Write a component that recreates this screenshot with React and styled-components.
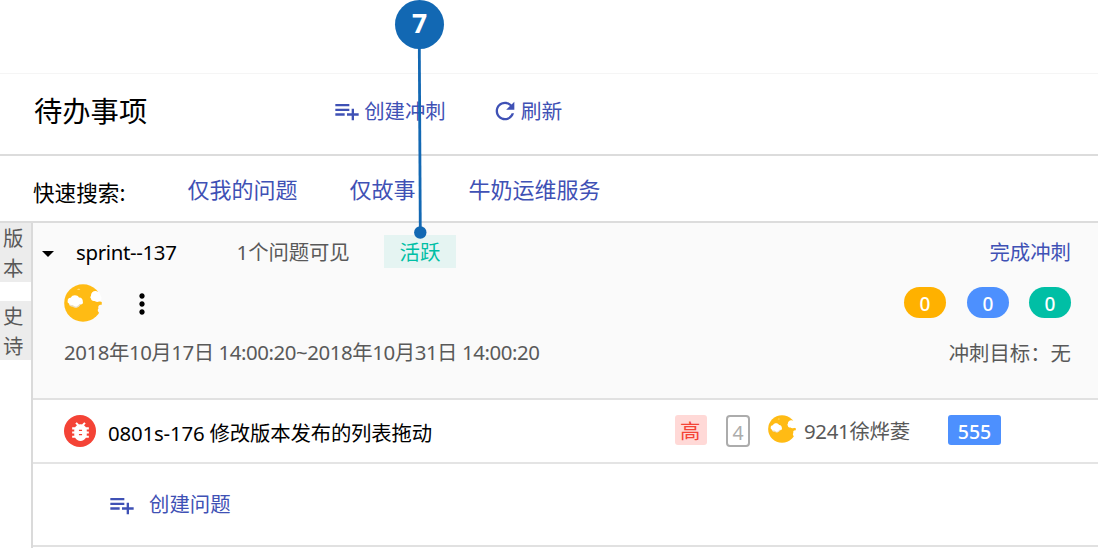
import React from "react";
import styled, { createGlobalStyle } from "styled-components";

const Global = createGlobalStyle`
  * { box-sizing: border-box; }
  html, body { margin: 0; padding: 0; background: #fff; overflow: hidden; }
  body { font-family: "Noto Sans", "Noto Sans CJK SC", sans-serif; }
`;

const Page = styled.div`
  position: relative;
  width: 1098px;
  height: 548px;
  background: #fff;
  display: flex;
  flex-direction: column;
  overflow: hidden;
`;

const TopBar = styled.div`
  height: 74px;
  flex: none;
  border-bottom: 1px solid #f5f5f5;
`;

const Text = styled.span`
  font-family: ${(p) => (p.$cjk ? '"Noto Sans CJK SC", sans-serif' : "inherit")};
  font-size: ${(p) => p.$size || 20.4}px;
  line-height: 30px;
  letter-spacing: ${(p) => p.$track || 0}px;
  font-weight: 400;
  color: ${(p) => p.$color || "#595959"};
  white-space: nowrap;
  margin-left: ${(p) => p.$left || 0}px;
  margin-top: ${(p) => p.$top || 0}px;
`;

const Header = styled.header`
  display: flex;
  align-items: flex-start;
  height: 82px;
  flex: none;
  padding: 21px 0 0 34px;
  border-bottom: 2px solid #dcdcdc;
`;

const Filters = styled.nav`
  display: flex;
  align-items: flex-start;
  height: 67px;
  flex: none;
  padding: 17px 0 0 33px;
  border-bottom: 2px solid #dcdcdc;
`;

const Action = styled.div`
  display: flex;
  align-items: flex-start;
  margin-left: ${(p) => p.$left}px;
`;

const Icon = styled.svg`
  flex: none;
  width: ${(p) => p.$size}px;
  height: ${(p) => p.$size}px;
  fill: ${(p) => p.$color || "#3f51b5"};
  margin-top: ${(p) => p.$top || 0}px;
`;

const Body = styled.div`
  display: flex;
  flex: 1;
`;

const Side = styled.aside`
  width: 33px;
  border-right: 2px solid #dadada;
  display: flex;
  flex-direction: column;
  gap: 19px;
`;

const SideTab = styled.div`
  height: 59px;
  width: 31px;
  padding-left: 3px;
  background: #ececec;
  color: #595959;
  font-family: "Noto Sans CJK SC", sans-serif;
  font-size: 20.4px;
  line-height: 29.5px;
  display: flex;
  flex-direction: column;
`;

const Main = styled.main`
  flex: 1;
  display: flex;
  flex-direction: column;
`;

const Sprint = styled.section`
  height: 177px;
  background: #fafafa;
  border-bottom: 2px solid #e1e1e1;
  padding-right: 27px;
`;

const SprintTop = styled.div`
  display: flex;
  align-items: flex-start;
  height: 61px;
  padding: 12px 0 0 9px;
`;

const Caret = styled.i`
  width: 0;
  height: 0;
  margin-top: 16px;
  border: 6.5px solid transparent;
  border-top: 6.5px solid #000;
  border-bottom: 0;
`;

const Status = styled.div`
  width: 72px;
  height: 33px;
  margin-left: 34px;
  background: #e5f4f2;
  display: flex;
  padding-left: 16px;
`;

const Spacer = styled.div`
  flex: 1;
`;

const SprintMiddle = styled.div`
  display: flex;
  align-items: flex-start;
  height: 51px;
  padding-left: 31px;
`;

const Count = styled.div`
  width: 42px;
  height: 31px;
  margin: 3px 0 0 ${(p) => p.$left || 0}px;
  border-radius: 16px;
  background: ${(p) => p.$bg};
  color: #fff;
  font-size: 19px;
  font-weight: 500;
  line-height: 34px;
  text-align: center;
`;

const SprintDates = styled.div`
  display: flex;
  align-items: flex-start;
  padding-left: 31px;
`;

const Issue = styled.div`
  display: flex;
  align-items: flex-start;
  height: 64px;
  padding: 15px 0 0 31px;
  border-bottom: 2px solid #e4e4e4;
`;

const BugBadge = styled.div`
  width: 32px;
  height: 32px;
  border-radius: 50%;
  background: #f44336;
  display: flex;
  align-items: center;
  justify-content: center;
`;

const Title = styled.div`
  width: 579px;
  display: flex;
  padding-left: 12px;
`;

const Priority = styled.div`
  width: 32px;
  height: 30px;
  border-radius: 3px;
  background: #ffd9d7;
  display: flex;
  padding-left: 5px;
`;

const Points = styled.div`
  width: 24px;
  height: 32px;
  margin: 0 18px 0 19px;
  border: 2px solid #acacac;
  border-radius: 4px;
  color: #acacac;
  font-size: 19.5px;
  line-height: 32px;
  text-align: center;
`;

const Epic = styled.div`
  width: 53px;
  height: 30px;
  margin-right: 97px;
  border-radius: 3px;
  background: #4d90fe;
  color: #fff;
  font-size: 19.5px;
  font-weight: 500;
  line-height: 33px;
  text-align: center;
`;

const Create = styled.div`
  display: flex;
  align-items: flex-start;
  height: 83px;
  padding: 24px 0 0 75px;
  border-bottom: 2px solid #e1e1e1;
`;

const Callout = styled.div`
  position: absolute;
  left: 395px;
  top: 0;
  width: 49px;
  height: 239px;
`;

const Bubble = styled.div`
  position: absolute;
  inset: 0 0 auto 0;
  height: 49px;
  border-radius: 50%;
  background: #1268b3;
  color: #fff;
  font-family: "Open Sans", "Noto Sans", sans-serif;
  font-weight: 700;
  font-size: 26.5px;
  line-height: 47px;
  text-align: center;
`;

const Pointer = styled.svg`
  position: absolute;
  left: 0;
  top: 0;
`;

const PlaylistAdd = ({ top }) => (
  <Icon viewBox="0 0 24 24" $size={28} $top={top}>
    <path d="M14 10H2v2h12v-2zm0-4H2v2h12V6zm4 8v-4h-2v4h-4v2h4v4h2v-4h4v-2h-4zM2 16h8v-2H2v2z" />
  </Icon>
);

const Refresh = () => (
  <Icon viewBox="0 0 24 24" $size={28} $top={2}>
    <path d="M17.65 6.35C16.2 4.9 14.21 4 12 4c-4.42 0-7.99 3.58-7.99 8s3.57 8 7.99 8c3.73 0 6.84-2.55 7.73-6h-2.08c-.82 2.33-3.04 4-5.65 4-3.31 0-6-2.69-6-6s2.69-6 6-6c1.66 0 3.14.69 4.22 1.78L13 11h7V4l-2.35 2.35z" />
  </Icon>
);

const More = styled(Icon)`
  margin-left: 24px;
`;

const Avatar = ({ size, bg }) => (
  <svg width={size} height={size} viewBox="0 0 38 38">
    <circle cx="19" cy="19" r="18.8" fill="#ffbb14" />
    <path d="M33 8.500L38 8.500V18l-4-1z" fill={bg} />
    <path d="M38 21c-2.500-1-4.500 1-3.500 3.500-1.500 1.500-.5 3.500 1 4.500l3 0z" fill={bg} />
    <path d="M27 12c-.5-3 3-6 6-4.500 2 0 3.500 2 3.500 4 2 2 1 5.500-1.500 6-2 .8-3.500.2-4.500-.5-2 .3-3.500-.8-3.500-2.500-1-.5-.8-2 0-2.500z" fill="#fff" />
    <path d="M3.700 17c-.3-2 1.300-3.500 3-3.200 1.500-3.500 7-3.200 8.300-.3 2.500-.2 4 2 3.800 4 .8 2-1 3.500-2.800 3-1.500 3.500-5 3.500-7 1-2 1-4-.3-4-2-1.300-.5-1.700-1.500-1.300-2.500z" fill="#fff" />
    <path d="M5 20c2 1.500 3 .5 4 1.500 2 2 5 1 6.500-1.500l2 0c-2 1-1 1-2.500 2.500-2 2-5 1.500-6 .2-2 .3-3.500-.8-4-2.700z" fill="#e8e0cd" />
    <path d="M13.200 6c.4-1.600 2.800-1.500 3-.2z" fill="#ffe08a" />
  </svg>
);

const Bug = () => (
  <svg width="25" height="25" viewBox="0 0 24 24" fill="#fff">
    <path d="M20 8h-2.810c-.45-.78-1.070-1.450-1.820-1.960L17 4.410 15.590 3l-2.170 2.170C12.960 5.060 12.490 5 12 5c-.49 0-.96.06-1.410.17L8.410 3 7 4.410l1.620 1.630C7.880 6.550 7.260 7.220 6.810 8H4v2h2.090c-.05.33-.09.66-.09 1v1H4v2h2v1c0 .34.04.67.09 1H4v2h2.810c1.040 1.790 2.970 3 5.190 3s4.150-1.210 5.190-3H20v-2h-2.090c.05-.33.09-.66.09-1v-1h2v-2h-2v-1c0-.34-.04-.67-.09-1H20V8zm-6.500 7.600h-3v-1.200h3v1.200zm0-4h-3v-1.200h3v1.200z" />
  </svg>
);

const LINK = "#3f51b5";

export default function App() {
  return (
    <Page>
      <Global />
      <TopBar />
      <Header>
        <Text $cjk $size={28.3} $color="#000">待办事项</Text>
        <Action $left={186}>
          <PlaylistAdd top={2} />
          <Text $cjk $color={LINK} $left={3}>创建冲刺</Text>
        </Action>
        <Action $left={45}>
          <Refresh />
          <Text $cjk $size={20.8} $color={LINK} $left={2}>刷新</Text>
        </Action>
      </Header>
      <Filters>
        <Text $cjk $size={21.6} $color="#000" $top={4}>快速搜索:</Text>
        <Text $cjk $size={22} $color={LINK} $left={62}>仅我的问题</Text>
        <Text $cjk $size={22} $color={LINK} $left={52}>仅故事</Text>
        <Text $cjk $size={22} $color={LINK} $left={53}>牛奶运维服务</Text>
      </Filters>
      <Body>
        <Side>
          <SideTab><span>版</span><span>本</span></SideTab>
          <SideTab><span>史</span><span>诗</span></SideTab>
        </Side>
        <Main>
          <Sprint>
            <SprintTop>
              <Caret />
              <Text $color="#000" $track={-0.32} $left={22} $top={2}>sprint--137</Text>
              <Text $left={60} $top={2} $track={-0.1}>1个问题可见</Text>
              <Status><Text $cjk $color="#00bfa5" $top={1}>活跃</Text></Status>
              <Spacer />
              <Text $cjk $color={LINK} $top={1}>完成冲刺</Text>
            </SprintTop>
            <SprintMiddle>
              <Avatar size={38} bg="#fafafa" />
              <More viewBox="0 0 24 24" $size={32} $top={4} $color="#000">
                <path d="M12 8c1.100 0 2-.9 2-2s-.9-2-2-2-2 .9-2 2 .9 2 2 2zm0 2c-1.100 0-2 .9-2 2s.9 2 2 2 2-.9 2-2-.9-2-2-2zm0 6c-1.100 0-2 .9-2 2s.9 2 2 2 2-.9 2-2-.9-2-2-2z" />
              </More>
              <Spacer />
              <Count $bg="#ffb100">0</Count>
              <Count $bg="#4d90fe" $left={21}>0</Count>
              <Count $bg="#00bfa5" $left={20}>0</Count>
            </SprintMiddle>
            <SprintDates>
              <Text $top={2} $track={-0.43}>2018年10月17日 14:00:20~2018年10月31日 14:00:20</Text>
              <Spacer />
              <Text $cjk $top={2}>冲刺目标：无</Text>
            </SprintDates>
          </Sprint>
          <Issue>
            <BugBadge><Bug /></BugBadge>
            <Title><Text $color="#000" $top={3} $track={-0.17}>0801s-176 修改版本发布的列表拖动</Text></Title>
            <Priority><Text $cjk $color="#f44336">高</Text></Priority>
            <Points>4</Points>
            <Avatar size={28} bg="#fff" />
            <Text $left={8} $top={1} $track={-0.3}>9241徐烨菱</Text>
            <Spacer />
            <Epic>555</Epic>
          </Issue>
          <Create>
            <PlaylistAdd top={3} />
            <Text $cjk $color={LINK} $left={13}>创建问题</Text>
          </Create>
        </Main>
      </Body>
      <Callout>
        <Pointer width="49" height="239">
          <path d="M24.300 45L25.300 232" stroke="#1268b3" strokeWidth="2.800" />
          <circle cx="25.300" cy="232.500" r="6.200" fill="#1268b3" />
        </Pointer>
        <Bubble>7</Bubble>
      </Callout>
    </Page>
  );
}
